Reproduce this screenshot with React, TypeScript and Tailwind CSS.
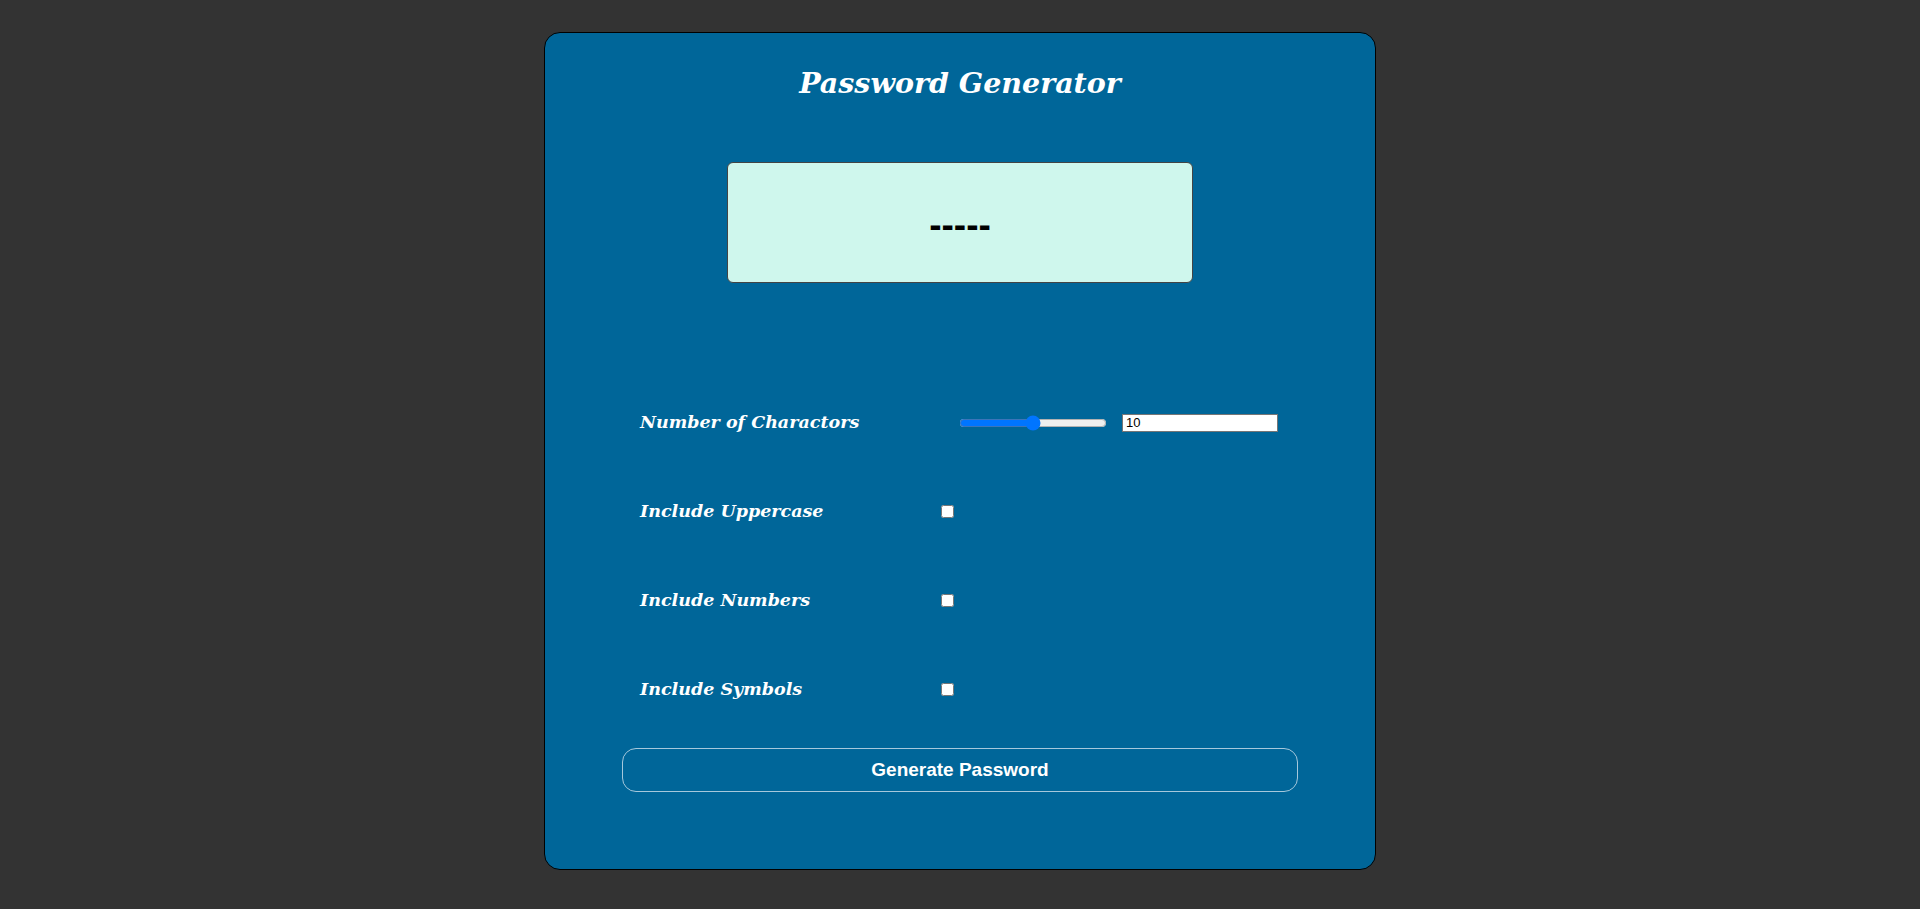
import React from "react";

const serif = "font-['DejaVu_Serif',Georgia,serif]";

function Row({ label, children }: { label: string; children: React.ReactNode }) {
  return (
    <div className="flex h-[89px] items-center">
      <div className={`w-[301px] shrink-0 ${serif} text-[17.5px] font-bold italic text-white`}>{label}</div>
      {children}
    </div>
  );
}

export default function App() {
  return (
    <div className="min-h-[909px] w-full bg-[#333333] pt-[32px]">
      <div className="mx-auto flex h-[838px] w-[832px] flex-col items-center rounded-[16px] border border-black bg-[#006699]">
        <h1 className={`mt-[30px] h-[40px] ${serif} text-[28.5px] font-bold italic leading-[40px] text-white`}>
          Password Generator
        </h1>
        <div className="mt-[59px] flex h-[121px] w-[466px] items-center justify-center rounded-[6px] border border-[#444444] bg-[#cff7ed]">
          <span className="pt-[4px] font-['Liberation_Sans',Arial,sans-serif] text-[37px] font-bold leading-none text-black">-----</span>
        </div>
        <div className="mt-[95px] flex w-full flex-col pl-[95px]">
          <Row label="Number of Charactors">
            <input
              type="range"
              min={0}
              max={20}
              defaultValue={10}
              className="ml-[18px] w-[148px] accent-[#0075ff]"
            />
            <input
              type="text"
              defaultValue="10"
              className="ml-[15px] h-[18px] w-[156px] border border-[#767676] bg-white px-[3px] font-['Liberation_Sans',Arial,sans-serif] text-[13px] leading-none text-black"
            />
          </Row>
          <Row label="Include Uppercase">
            <input type="checkbox" className="h-[13px] w-[13px]" />
          </Row>
          <Row label="Include Numbers">
            <input type="checkbox" className="h-[13px] w-[13px]" />
          </Row>
          <Row label="Include Symbols">
            <input type="checkbox" className="h-[13px] w-[13px]" />
          </Row>
        </div>
        <button className="mt-[14px] h-[44px] w-[676px] rounded-[14px] border border-[#a6c8dc] bg-transparent font-['Liberation_Sans',Arial,sans-serif] text-[19px] font-bold text-white">
          Generate Password
        </button>
      </div>
    </div>
  );
}
